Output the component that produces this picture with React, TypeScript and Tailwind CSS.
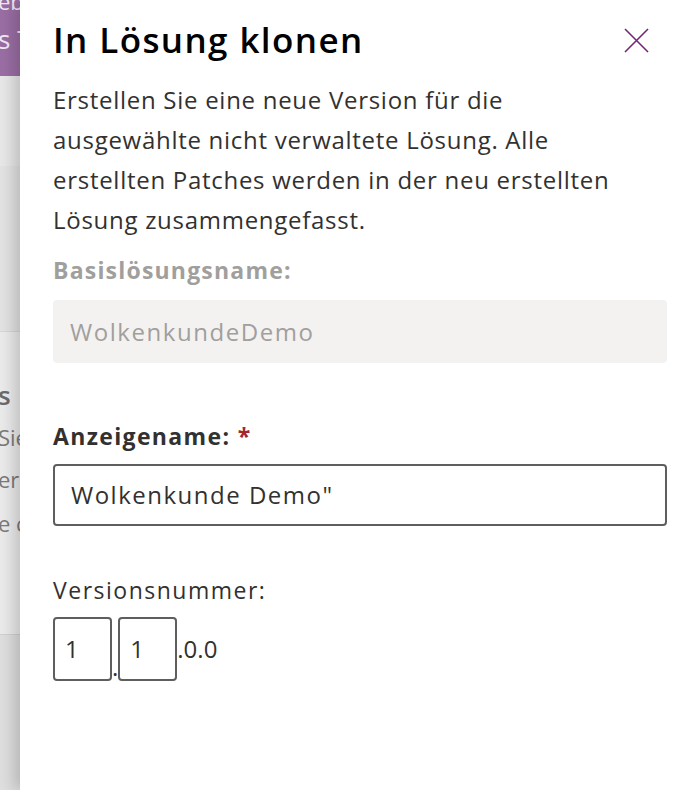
import React from "react";

const font = { fontFamily: '"Open Sans", "Noto Sans", sans-serif' };

function BackgroundStrip() {
  return (
    <div className="w-[20px] shrink-0 overflow-hidden flex flex-col text-[22px] leading-none whitespace-nowrap">
      <div className="h-[76px] bg-[#9a6ea4] text-[#f3e9f5]">
        <div className="-mt-[10px] ml-[-2px]">ebu</div>
        <div className="mt-[14px] ml-[-2px] text-[26px]">s T</div>
      </div>
      <div className="h-[90px] bg-[#e7e7e7]" />
      <div className="h-[166px] bg-[#e2e2e2] border-b border-[#d6d6d6]" />
      <div className="h-[302px] bg-[#eaeaea] text-[#7a7a7a] pt-[50px]">
        <div className="font-semibold text-[26px] text-[#6b6b6b] ml-[-2px]">s</div>
        <div className="mt-[18px] ml-[-2px]">Sie</div>
        <div className="mt-[20px] ml-[-2px]">er</div>
        <div className="mt-[22px] ml-[-2px]">e c</div>
      </div>
      <div className="flex-1 bg-[#dedede] border-t border-[#d0d0d0]" />
    </div>
  );
}

export default function App() {
  return (
    <div className="flex h-[790px] w-[700px] overflow-hidden bg-white" style={font}>
      <BackgroundStrip />
      <div className="flex-1 bg-white shadow-[-6px_0_14px_rgba(0,0,0,0.18)] pl-[33px] pr-[33px]">
        <div className="flex items-start justify-between pt-[14px]">
          <h1 className="text-[35px] font-semibold text-black leading-[52px] tracking-[1.4px]">
            In Lösung klonen
          </h1>
          <button className="mt-[14px] mr-[18px] w-[25px] h-[25px] flex items-center justify-center">
            <svg width="25" height="25" viewBox="0 0 25 25">
              <path d="M1 1 L24 24 M24 1 L1 24" stroke="#742774" strokeWidth="1.6" />
            </svg>
          </button>
        </div>

        <p className="mt-[14px] text-[24px] leading-[40px] text-[#323130] tracking-[0.72px]">
          Erstellen Sie eine neue Version für die
          <br />
          ausgewählte nicht verwaltete Lösung. Alle
          <br />
          erstellten Patches werden in der neu erstellten
          <br />
          Lösung zusammengefasst.
        </p>

        <div className="mt-[12px] text-[23px] font-bold text-[#a19f9d] leading-[36px] tracking-[1.2px]">
          Basislösungsname:
        </div>
        <div className="mt-[12px] h-[63px] rounded-[4px] bg-[#f3f2f1] flex items-center px-[17px] text-[24px] text-[#a19f9d] tracking-[1.55px]">
          WolkenkundeDemo
        </div>

        <div className="mt-[55px] text-[23px] font-bold text-[#323130] leading-[36px] tracking-[1.35px]">
          Anzeigename: <span className="text-[#a4262c]">*</span>
        </div>
        <div className="mt-[10px] h-[62px] rounded-[4px] border-2 border-[#605e5c] flex items-center px-[16px] text-[24px] text-[#323130] tracking-[1.5px]">
          Wolkenkunde Demo"
        </div>

        <div className="mt-[46px] text-[23px] text-[#323130] leading-[36px] tracking-[1.5px]">
          Versionsnummer:
        </div>
        <div className="mt-[9px] flex items-end text-[24px] text-[#323130]">
          <div className="w-[59px] h-[64px] rounded-[4px] border-2 border-[#605e5c] flex items-center px-[10px]">
            1
          </div>
          <span className="leading-[28px]">.</span>
          <div className="w-[59px] h-[64px] rounded-[4px] border-2 border-[#605e5c] flex items-center px-[10px]">
            1
          </div>
          <span className="self-center">.0.0</span>
        </div>
      </div>
    </div>
  );
}
